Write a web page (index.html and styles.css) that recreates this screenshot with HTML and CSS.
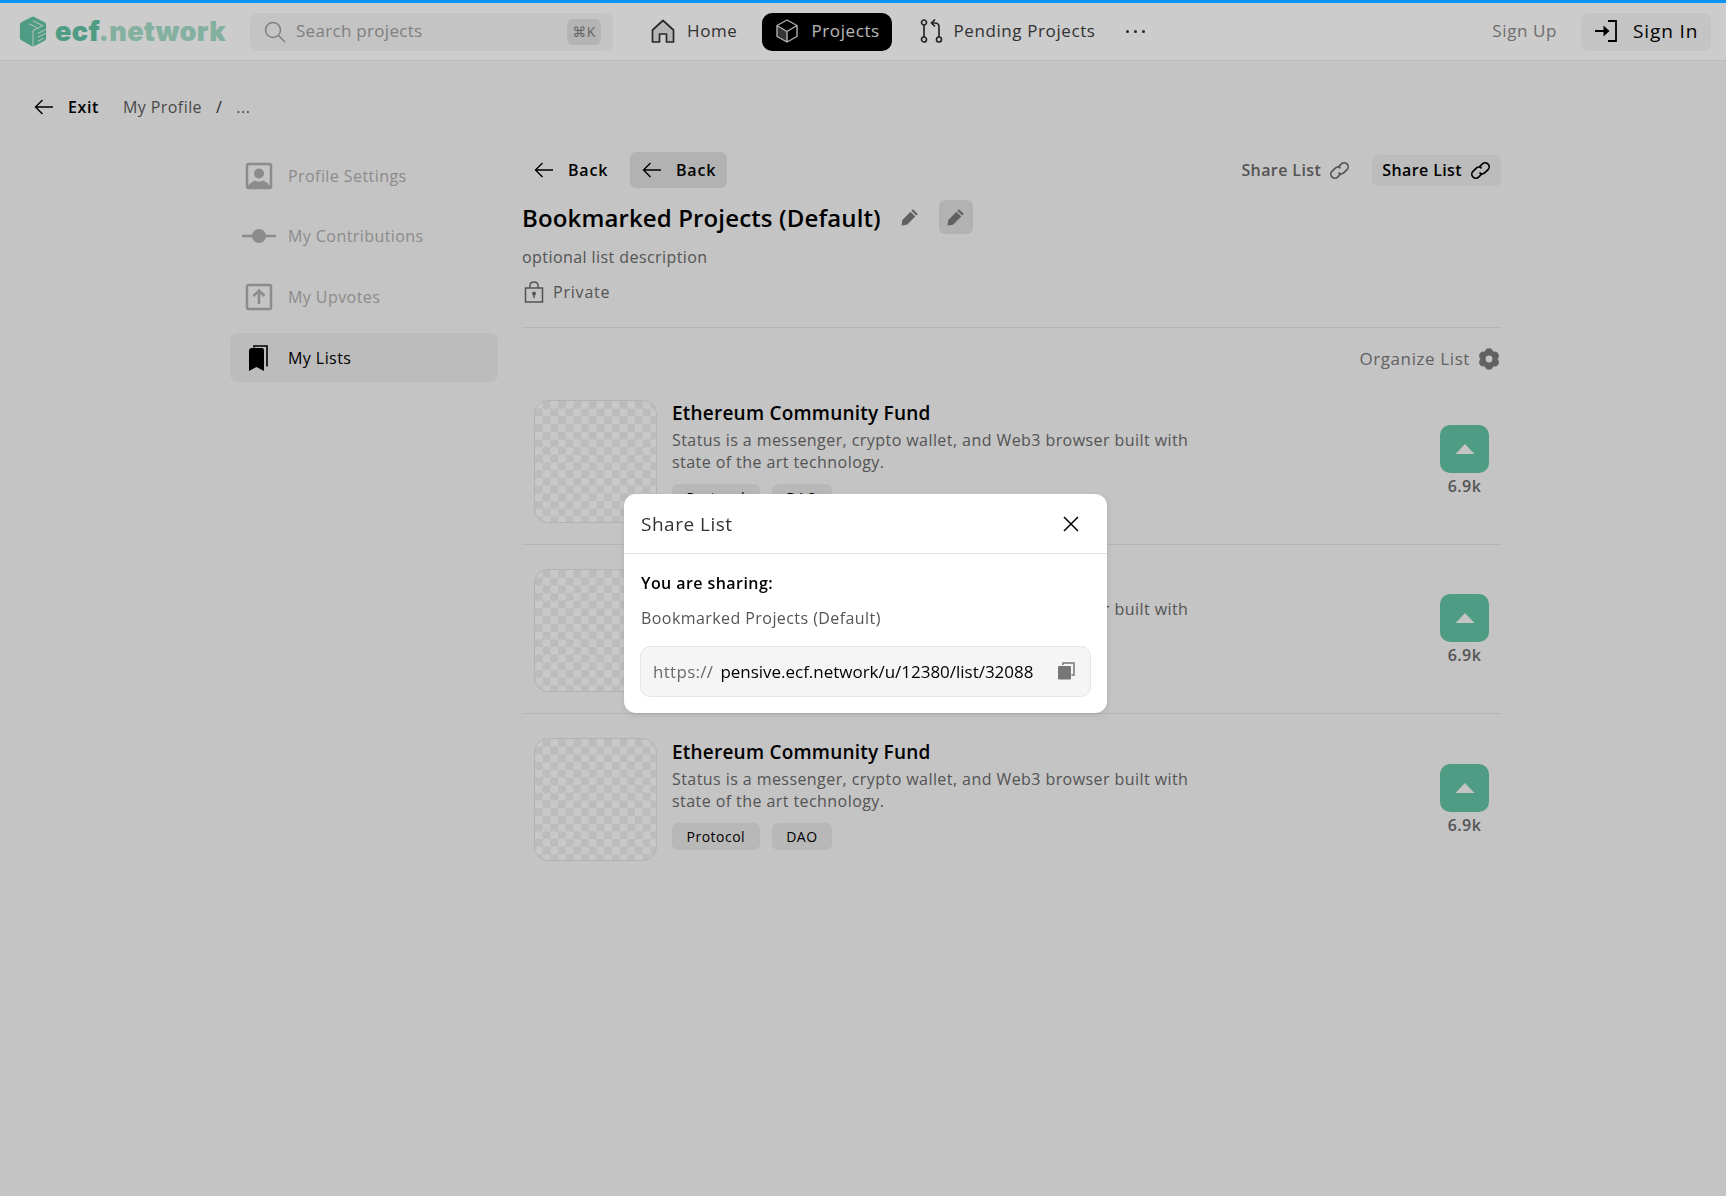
FILE: index.html
```html
<!DOCTYPE html>
<html lang="en">
<head>
  <meta charset="UTF-8" />
  <title>Bookmarked Projects | ecf.network</title>
  <link rel="stylesheet" href="styles.css">
</head>
<body>
  <svg class="sprites" width="0" height="0" aria-hidden="true">
    <symbol id="arrow-left" viewBox="0 0 20 20"><path d="M19 10H1.5M8.5 3l-7 7 7 7" fill="none" stroke="currentColor" stroke-width="1.4"/></symbol>
    <symbol id="link" viewBox="0 0 20 20"><g fill="none" stroke="currentColor" stroke-width="1.6"><path d="M9 6.5l2.8-2.8a3.7 3.7 0 0 1 5.2 0l.2.2a3.7 3.7 0 0 1 0 5.2l-3 3a3.7 3.7 0 0 1-5.2 0"/><path d="M11 13.5l-2.8 2.8a3.7 3.7 0 0 1-5.2 0l-.2-.2a3.7 3.7 0 0 1 0-5.2l3-3a3.7 3.7 0 0 1 5.2 0"/></g></symbol>
    <symbol id="pencil" viewBox="0 0 20 20"><path d="M13 2.2l4.8 4.8-1.6 1.6-4.8-4.8zM10.5 4.8l4.8 4.8-8.3 8.2-5.5.8.8-5.6z" fill="currentColor"/></symbol>
    <symbol id="caret" viewBox="0 0 20 12"><path d="M10 1l9.5 10H.5z" fill="currentColor"/></symbol>
  </svg>

  <div class="progress"></div>

  <header class="topbar">
    <a class="logo">
      <svg class="logo-mark" viewBox="0 0 28 32"><path d="M12 1.200q2-1.200 4 0l10 5.300q1.500.8 1.500 2.500v14q0 1.700-1.500 2.500l-10 5.300q-2 1.200-4 0L2 25q-1.500-.8-1.500-2.500V9q0-1.700 1.500-2.500z" fill="#63c4a5"/><path d="M14 5l10 5-10 5M10 8l8 4M14 15v16M19 18l8-4M19 22l8-4M19 26l6-3" fill="none" stroke="#fff" stroke-opacity=".75" stroke-width="1.100"/></svg>
      <span class="logo-text">ecf<span class="logo-light">.network</span></span>
    </a>
    <div class="search">
      <svg class="search-icon" viewBox="0 0 22 22"><circle cx="9" cy="9" r="7.500" fill="none" stroke="currentColor" stroke-width="1.500"/><path d="M14.500 14.500l6.500 6.500" stroke="currentColor" stroke-width="1.500"/></svg>
      <span class="search-text">Search projects</span>
      <kbd class="kbd">⌘K</kbd>
    </div>
    <nav class="nav">
      <a class="nav-item nav-home">
        <svg class="nav-icon" viewBox="0 0 24 24"><path d="M1.500 11L12 1.500 22.500 11v12H15.500v-8h-7v8H1.500z" fill="#e3e3e3" stroke="#333" stroke-width="1.700" stroke-linejoin="round"/></svg>
        Home
      </a>
      <a class="nav-item nav-active">
        <svg class="nav-icon" viewBox="0 0 24 24"><path d="M12 12.500L2 7v11l10 5.500z" fill="#444"/><path d="M12 1L22 6.500v11L12 23 2 17.500v-11zM2 6.500l10 6 10-6M12 12.500V23" fill="none" stroke="#ddd" stroke-width="1.400" stroke-linejoin="round"/></svg>
        Projects
      </a>
      <a class="nav-item nav-pending">
        <svg class="nav-icon" viewBox="0 0 24 24"><g fill="none" stroke="#333" stroke-width="1.700"><circle cx="4" cy="3.500" r="2.500"/><circle cx="4" cy="20.500" r="2.500"/><circle cx="19" cy="20.500" r="2.500"/><path d="M4 6v12M19 18V8q0-4-4-4h-3M15 .5L11.500 4l3.500 3.500"/></g></svg>
        Pending Projects
      </a>
      <a class="nav-more"><i></i><i></i><i></i></a>
    </nav>
    <a class="signup">Sign Up</a>
    <a class="signin">
      <svg class="signin-icon" viewBox="0 0 24 24"><path d="M1 12h13M14 2h8v20h-8" fill="none" stroke="#000" stroke-width="1.800"/><path d="M9.500 6.500L15.500 12l-6 5.500z"/></svg>
      Sign In
    </a>
  </header>

  <div class="crumbs">
    <a class="exit"><svg class="arrow"><use href="#arrow-left"/></svg>Exit</a>
    <span class="crumb">My Profile</span>
    <span class="crumb-sep">/</span>
    <span class="crumb">...</span>
  </div>

  <div class="layout">
    <aside class="sidebar">
      <a class="side-item">
        <svg class="side-icon" viewBox="0 0 28 28"><rect x="2" y="2" width="24" height="24" rx="1.500" fill="none" stroke="currentColor" stroke-width="2.500"/><circle cx="14" cy="11.500" r="5" fill="currentColor"/><path d="M3 26v-2q3-4 7-5.500 4 2.500 8 0 4 1.500 7 5.500v2z" fill="currentColor"/></svg>
        Profile Settings
      </a>
      <a class="side-item">
        <svg class="side-icon" viewBox="0 0 36 28"><path d="M1 14h34" stroke="currentColor" stroke-width="2.500"/><circle cx="18" cy="14" r="7" fill="currentColor"/></svg>
        My Contributions
      </a>
      <a class="side-item">
        <svg class="side-icon" viewBox="0 0 28 28"><rect x="2" y="2" width="24" height="24" rx="1.500" fill="none" stroke="currentColor" stroke-width="2.500"/><path d="M14 21V8M8.500 13L14 7.500l5.500 5.500" fill="none" stroke="currentColor" stroke-width="2.500"/></svg>
        My Upvotes
      </a>
      <a class="side-item side-active">
        <svg class="side-icon" viewBox="0 0 28 28"><path d="M9 3.500V2h13v20.500" fill="none" stroke="#000" stroke-width="1.600"/><path d="M4 7q0-3 3-3h10q2 0 2 2v21l-7.500-4L4 27z" fill="#000"/></svg>
        My Lists
      </a>
    </aside>

    <main class="content">
      <div class="toolbar">
        <a class="btn"><svg class="arrow"><use href="#arrow-left"/></svg>Back</a>
        <a class="btn btn-hover"><svg class="arrow"><use href="#arrow-left"/></svg>Back</a>
        <a class="share share-first">Share List <svg class="link-icon"><use href="#link"/></svg></a>
        <a class="share share-hover">Share List <svg class="link-icon"><use href="#link"/></svg></a>
      </div>

      <div class="title-row">
        <h1 class="title">Bookmarked Projects (Default)</h1>
        <a class="edit"><svg class="edit-icon"><use href="#pencil"/></svg></a>
        <a class="edit edit-hover"><svg class="edit-icon"><use href="#pencil"/></svg></a>
      </div>
      <p class="desc">optional list description</p>
      <div class="privacy">
        <svg class="lock" viewBox="0 0 20 22"><path d="M6 7V4.500q0-3.500 4-3.500t4 3.500V7M1.500 7h17v14h-17z" fill="none" stroke="currentColor" stroke-width="1.500"/><circle cx="10" cy="12.500" r="2" fill="currentColor"/><path d="M10 13v4" stroke="currentColor" stroke-width="1.500"/></svg>
        Private
      </div>

      <div class="organize">
        Organize List
        <svg class="gear" viewBox="0 0 22 22"><g fill="currentColor"><circle cx="11" cy="4.500" r="4.300"/><circle cx="11" cy="17.500" r="4.300"/><circle cx="5.400" cy="7.750" r="4.300"/><circle cx="16.600" cy="7.750" r="4.300"/><circle cx="5.400" cy="14.250" r="4.300"/><circle cx="16.600" cy="14.250" r="4.300"/></g><circle cx="11" cy="11" r="3.400" fill="#f5f5f5"/></svg>
      </div>

      <article class="card">
        <div class="thumb"></div>
        <div class="card-body">
          <h2 class="card-title">Ethereum Community Fund</h2>
          <p class="card-text">Status is a messenger, crypto wallet, and Web3 browser built with state of the art technology.</p>
          <div class="tags"><span class="tag">Protocol</span><span class="tag">DAO</span></div>
        </div>
        <div class="vote">
          <a class="vote-btn"><svg class="caret"><use href="#caret"/></svg></a>
          <span class="vote-count">6.9k</span>
        </div>
      </article>
      <article class="card">
        <div class="thumb"></div>
        <div class="card-body">
          <h2 class="card-title">Ethereum Community Fund</h2>
          <p class="card-text">Status is a messenger, crypto wallet, and Web3 browser built with state of the art technology.</p>
          <div class="tags"><span class="tag">Protocol</span><span class="tag">DAO</span></div>
        </div>
        <div class="vote">
          <a class="vote-btn"><svg class="caret"><use href="#caret"/></svg></a>
          <span class="vote-count">6.9k</span>
        </div>
      </article>
      <article class="card">
        <div class="thumb"></div>
        <div class="card-body">
          <h2 class="card-title">Ethereum Community Fund</h2>
          <p class="card-text">Status is a messenger, crypto wallet, and Web3 browser built with state of the art technology.</p>
          <div class="tags"><span class="tag">Protocol</span><span class="tag">DAO</span></div>
        </div>
        <div class="vote">
          <a class="vote-btn"><svg class="caret"><use href="#caret"/></svg></a>
          <span class="vote-count">6.9k</span>
        </div>
      </article>
    </main>
  </div>

  <div class="overlay"></div>

  <div class="modal">
    <div class="modal-head">
      <h3 class="modal-title">Share List</h3>
      <svg class="close" viewBox="0 0 16 16"><path d="M1 1l14 14M15 1L1 15" stroke="#000" stroke-width="1.500"/></svg>
    </div>
    <div class="modal-body">
      <p class="modal-label">You are sharing:</p>
      <p class="modal-name">Bookmarked Projects (Default)</p>
      <div class="url">
        <span class="url-scheme">https://</span>
        <span class="url-path">pensive.ecf.network/u/12380/list/32088</span>
        <svg class="copy" viewBox="0 0 18 18"><path d="M6 3V1h11v12h-2.500" fill="none" stroke="#777" stroke-width="1.500"/><rect x="1" y="4" width="13" height="13.500" rx="1" fill="#777"/></svg>
      </div>
    </div>
  </div>
</body>
</html>
```

FILE: styles.css
```css
* {
  box-sizing: border-box;
}
body {
  margin: 0;
  min-height: 1196px;
  font-family: "Open Sans", sans-serif;
  letter-spacing: 0.43px;
  background-color: #f5f5f5;
  color: #000;
  overflow: hidden;
}
h1, h2, h3, p {
  margin: 0;
}
.sprites {
  position: absolute;
}

.progress {
  position: relative;
  z-index: 20;
  height: 3px;
  background-color: #0c93f2;
}
.topbar {
  display: flex;
  align-items: center;
  height: 58px;
  padding: 0 15px 0 19px;
  background-color: #fff;
  border-bottom: 1px solid #ececec;
}
.logo {
  display: flex;
  align-items: center;
  gap: 8px;
  width: 231px;
}
.logo-mark {
  flex: none;
  width: 28px;
  height: 31px;
}
.logo-text {
  font-family: Inter, sans-serif;
  font-weight: 900;
  font-size: 27px;
  letter-spacing: 0.4px;
  color: #63c4a5;
}
.logo-light {
  color: #a5dcc9;
}
.search {
  display: flex;
  align-items: center;
  width: 363px;
  height: 38px;
  padding: 0 12px 0 14px;
  border-radius: 8px;
  background-color: #f5f5f5;
  color: #a0a0a0;
}
.search-icon {
  width: 22px;
  height: 22px;
}
.search-text {
  flex: 1;
  margin-left: 10px;
  padding-bottom: 2px;
  font-size: 17px;
  letter-spacing: 0.3px;
}
.kbd {
  width: 34px;
  height: 26px;
  border-radius: 6px;
  background-color: #e1e1e1;
  color: #7c7c7c;
  font-family: "Open Sans", "DejaVu Sans", sans-serif;
  font-size: 14px;
  line-height: 26px;
  text-align: center;
}
.nav {
  display: flex;
  align-items: center;
  margin-left: 38px;
  flex: 1;
}
.nav-item {
  display: flex;
  align-items: center;
  gap: 9px;
  height: 38px;
  padding-bottom: 2px;
  color: #404040;
  font-size: 17px;
  font-weight: 500;
  letter-spacing: 0.6px;
}
.nav-icon {
  width: 24px;
  height: 24px;
}
.nav-home {
  gap: 12px;
  margin-right: 13px;
  padding-right: 12px;
}
.nav-active {
  width: 130px;
  padding-left: 13px;
  gap: 12px;
  border-radius: 10px;
  background-color: #000;
  color: #e6e6e6;
}
.nav-pending {
  margin-left: 28px;
}
.nav-more {
  display: flex;
  gap: 5px;
  margin-left: 30px;
}
.nav-more i {
  width: 3px;
  height: 3px;
  border-radius: 50%;
  background-color: #333;
}
.signup {
  margin-right: 24px;
  padding-bottom: 2px;
  color: #8a8a8a;
  font-size: 17px;
  letter-spacing: 0.6px;
}
.signin {
  display: flex;
  align-items: center;
  gap: 15px;
  width: 130px;
  height: 38px;
  padding: 0 0 2px 13px;
  border-radius: 8px;
  background-color: #f5f5f5;
  font-size: 19px;
  font-weight: 500;
  letter-spacing: 0.9px;
}
.signin-icon {
  width: 24px;
  height: 24px;
}

.crumbs {
  display: flex;
  align-items: center;
  height: 46px;
  margin-top: 23px;
  padding-left: 34px;
  font-size: 16px;
}
.arrow {
  width: 20px;
  height: 20px;
  flex: none;
}
.exit {
  display: flex;
  align-items: center;
  gap: 14px;
  margin-right: 24px;
  font-weight: 600;
  letter-spacing: 0.6px;
}
.crumb {
  color: #5c5c5c;
}
.crumb-sep {
  margin: 0 14px;
  color: #333;
}

.layout {
  display: flex;
  margin-top: 22px;
  padding-left: 230px;
}
.sidebar {
  display: flex;
  flex-direction: column;
  gap: 12.35px;
  width: 268px;
}
.side-item {
  display: flex;
  align-items: center;
  height: 48px;
  color: #afafaf;
  font-size: 16px;
}
.side-icon {
  flex: none;
  width: 36px;
  height: 28px;
  margin: 0 11px 0 11px;
}
.side-active {
  height: 49px;
  border-radius: 8px;
  background-color: #ebebeb;
  color: #000;
}
.content {
  width: 979px;
  margin-left: 24px;
}
.toolbar {
  display: flex;
  align-items: center;
  height: 36px;
}
.btn {
  display: flex;
  align-items: center;
  gap: 14px;
  width: 97px;
  height: 36px;
  padding-left: 12px;
  border-radius: 6px;
  font-size: 16px;
  font-weight: 600;
  letter-spacing: 0.8px;
}
.btn + .btn {
  margin-left: 11px;
}
.btn-hover {
  background-color: #dfdfdf;
}
.share {
  display: flex;
  align-items: center;
  gap: 8px;
  height: 31px;
  padding: 0 10px;
  border-radius: 6px;
  font-size: 16px;
  font-weight: 600;
  letter-spacing: 0.4px;
}
.share-first {
  margin-left: auto;
  margin-right: 12px;
  color: #6a6a6a;
}
.share-hover {
  background-color: #ebebeb;
}
.link-icon {
  width: 21px;
  height: 21px;
}
.title-row {
  display: flex;
  align-items: center;
  height: 36px;
  margin-top: 11px;
}
.title {
  font-size: 24px;
  font-weight: 600;
  letter-spacing: 0.13px;
}
.edit {
  display: flex;
  align-items: center;
  justify-content: center;
  width: 34px;
  height: 34px;
  margin-left: 12px;
  border-radius: 6px;
  color: #7a7a7a;
}
.edit-hover {
  margin-left: 12px;
  background-color: #dfdfdf;
}
.edit-icon {
  width: 20px;
  height: 20px;
}
.desc {
  margin-top: 10px;
  color: #6a6a6a;
  font-size: 16px;
  line-height: 24px;
}
.privacy {
  display: flex;
  align-items: center;
  gap: 9px;
  height: 28px;
  margin-top: 9px;
  padding-left: 2px;
  color: #6a6a6a;
  font-size: 16px;
  font-weight: 500;
  letter-spacing: 0.8px;
}
.lock {
  width: 20px;
  height: 22px;
}
.organize {
  display: flex;
  align-items: center;
  justify-content: flex-end;
  gap: 8px;
  height: 48.5px;
  margin-top: 21px;
  padding: 14px 1px 0 0;
  border-top: 1px solid #e3e3e3;
  color: #7a7a7a;
  font-size: 17px;
  font-weight: 500;
  letter-spacing: 0.6px;
}
.gear {
  width: 22px;
  height: 22px;
}
.card {
  display: flex;
  height: 169.4px;
  padding: 24px 12px 0 11.5px;
  border-bottom: 1px solid #e3e3e3;
}
.card:last-child {
  border-bottom: 0;
}
.thumb {
  flex: none;
  width: 123.5px;
  height: 123px;
  border: 1px solid #e0e0e0;
  border-radius: 14px;
  background-color: #fafafa;
  background-image: conic-gradient(#ebebeb 25%, transparent 0 50%, #ebebeb 0 75%, transparent 0);
  background-size: 15.4px 15.4px;
}
.card-body {
  flex: none;
  width: 540px;
  margin-left: 15px;
  padding-top: 1.5px;
}
.card-title {
  font-size: 19px;
  font-weight: 600;
  line-height: 24px;
  letter-spacing: 0.22px;
}
.card-text {
  margin-top: 4px;
  color: #6a6a6a;
  font-size: 16px;
  line-height: 22px;
}
.tags {
  display: flex;
  gap: 12px;
  margin-top: 11px;
}
.tag {
  height: 27px;
  padding: 0 14.5px;
  border-radius: 6px;
  background-color: #e6e6e6;
  font-size: 14px;
  font-weight: 500;
  line-height: 27px;
  letter-spacing: 0.5px;
}
.vote {
  display: flex;
  flex-direction: column;
  align-items: center;
  width: 49px;
  margin-left: auto;
  padding-top: 25.5px;
}
.vote-btn {
  display: flex;
  align-items: center;
  justify-content: center;
  width: 49px;
  height: 48px;
  border-radius: 10px;
  background-color: #63c4a5;
}
.caret {
  width: 20px;
  height: 12px;
  color: #f5f5f5;
}
.vote-count {
  margin-top: 2px;
  color: #6a6a6a;
  font-size: 16px;
  font-weight: 600;
}

.overlay {
  position: fixed;
  inset: 0;
  z-index: 10;
  background-color: rgba(0, 0, 0, 0.2);
}
.modal {
  position: absolute;
  left: 624px;
  top: 494px;
  z-index: 11;
  width: 483px;
  height: 219px;
  border-radius: 12px;
  background-color: #fff;
  box-shadow: 0 2px 6px rgba(0, 0, 0, 0.1);
}
.modal-head {
  display: flex;
  align-items: center;
  justify-content: space-between;
  height: 60px;
  padding: 0 28px 0 17px;
  border-bottom: 1px solid #e3e3e3;
}
.modal-title {
  color: #333;
  font-size: 19px;
  font-weight: 500;
  letter-spacing: 0.5px;
}
.close {
  width: 16px;
  height: 16px;
}
.modal-body {
  padding: 17px 16px 0;
}
.modal-label {
  padding-left: 1px;
  font-size: 16px;
  font-weight: 600;
  line-height: 24px;
}
.modal-name {
  margin-top: 11px;
  padding-left: 1px;
  color: #555;
  font-size: 16px;
  line-height: 24px;
}
.url {
  display: flex;
  align-items: center;
  height: 51px;
  margin-top: 16px;
  padding: 0 15px 1px 12px;
  border: 1px solid #e6e6e6;
  border-radius: 10px;
  background-color: #f5f5f5;
  font-size: 17px;
  letter-spacing: -0.02px;
}
.url-scheme {
  color: #6a6a6a;
  letter-spacing: 0.3px;
}
.url-path {
  flex: 1;
  margin-left: 7px;
}
.copy {
  width: 18px;
  height: 18px;
}
```
